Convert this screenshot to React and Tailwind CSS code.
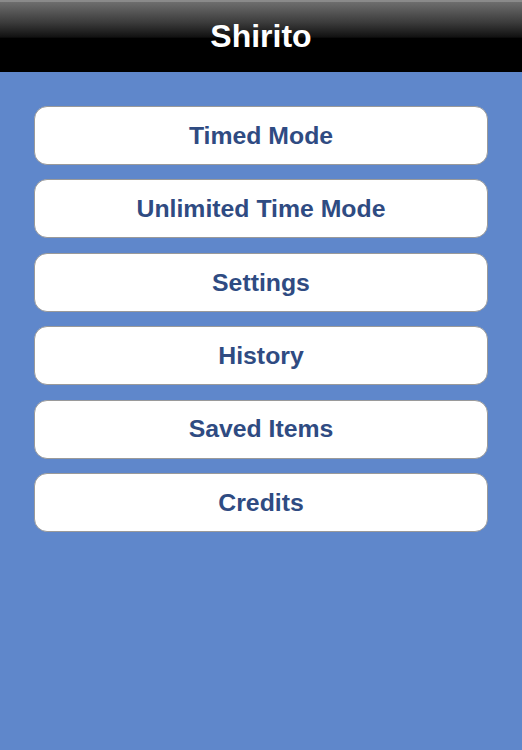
import React from 'react';

const items = ['Timed Mode', 'Unlimited Time Mode', 'Settings', 'History', 'Saved Items', 'Credits'];

export default function App() {
  return (
    <div className="w-[522px] h-[750px] flex flex-col bg-[#5f87cb]" style={{ fontFamily: '"Liberation Sans", Arial, sans-serif' }}>
      <div className="h-[72px] flex items-center justify-center pb-[3px] border-t-2 border-[#8a8a8a] bg-[linear-gradient(to_bottom,#6e6e6e_0%,#3a3a3a_30%,#111_50%,#000_52%,#000_100%)]">
        <h1 className="text-white font-bold text-[32px]">Shirito</h1>
      </div>
      <div className="flex flex-col gap-[14.4px] px-[34px] pt-[34px]">
        {items.map((t) => (
          <button
            key={t}
            className="h-[59px] w-full bg-white rounded-[13px] border-[1.5px] border-[#9a9a9a] text-[#2f4b82] font-bold text-[24.8px]"
          >
            {t}
          </button>
        ))}
      </div>
    </div>
  );
}
